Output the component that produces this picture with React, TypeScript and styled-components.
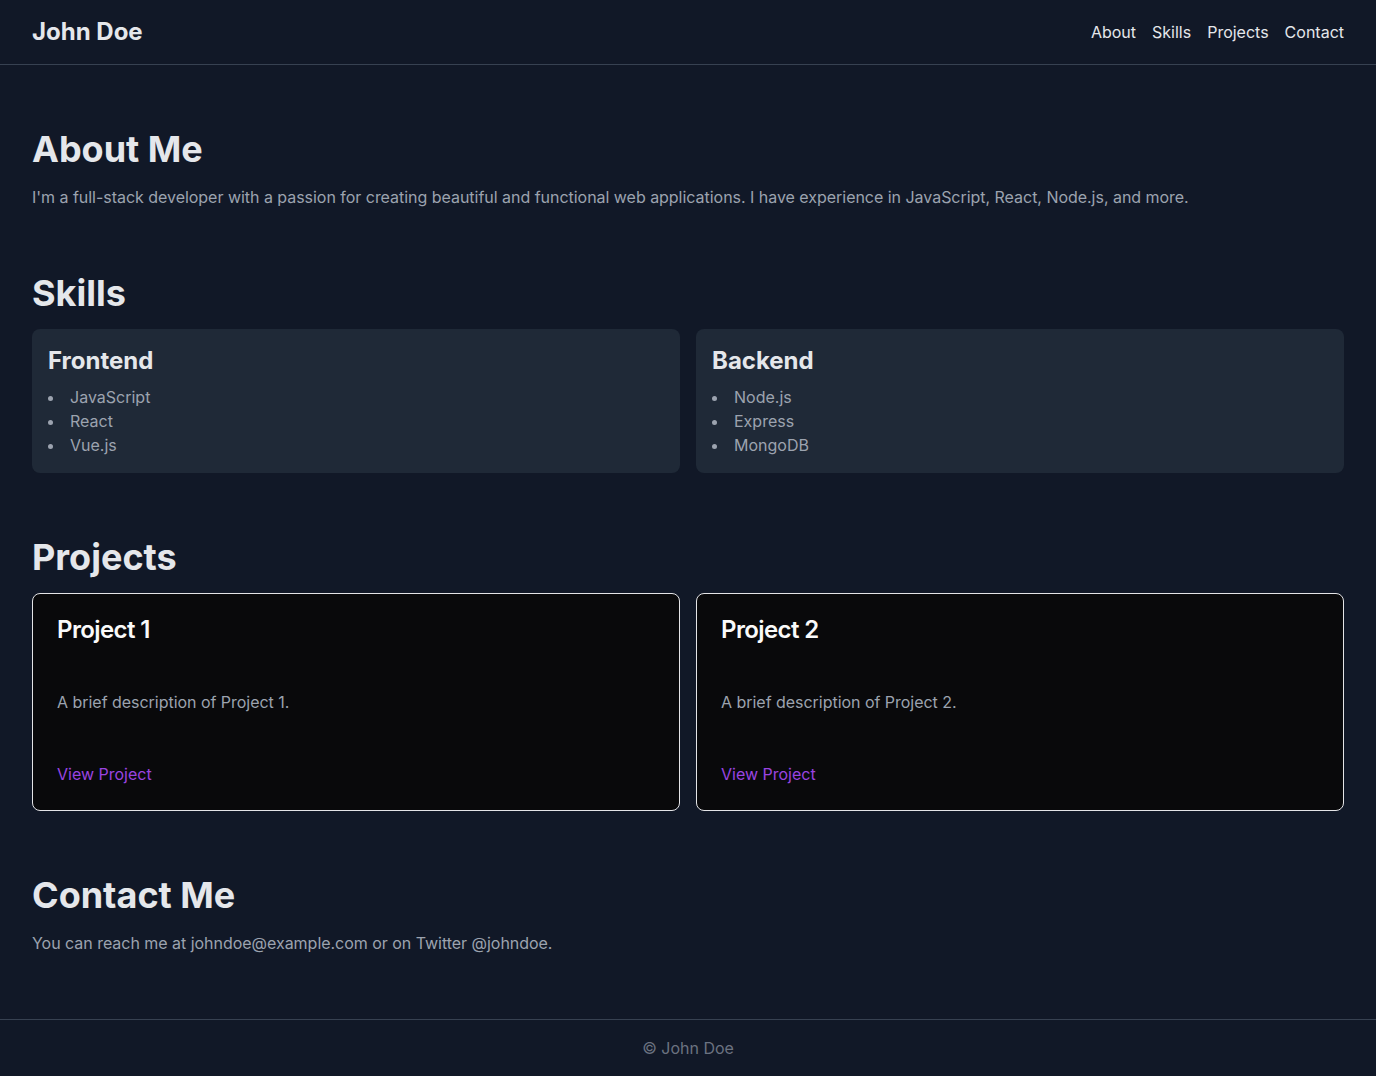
import React from "react";
import styled, { createGlobalStyle } from "styled-components";

const GlobalStyle = createGlobalStyle`
  html, body { margin: 0; padding: 0; }
  body {
    background: #111827;
    color: #e5e7eb;
    font-family: Inter, "Noto Sans", "Liberation Sans", sans-serif;
    font-size: 16px;
    line-height: 24px;
  }
  * { box-sizing: border-box; }
`;

const Page = styled.div`
  min-height: 100vh;
  display: flex;
  flex-direction: column;
  background: #111827;
`;

const Header = styled.header`
  display: flex;
  align-items: center;
  justify-content: space-between;
  padding: 16px 32px;
  border-bottom: 1px solid #374151;
`;

const Brand = styled.h1`
  margin: 0;
  font-size: 24px;
  line-height: 32px;
  font-weight: 700;
  color: #e5e7eb;
`;

const Nav = styled.nav`
  display: flex;
  gap: 16px;
`;

const NavLink = styled.a`
  color: #e5e7eb;
  text-decoration: none;
  font-size: 16px;
  line-height: 24px;
`;

const Main = styled.main`
  flex: 1;
  padding: 32px;
`;

const Section = styled.section`
  padding: 32px 0;
`;

const SectionTitle = styled.h2`
  margin: 0 0 16px;
  font-size: 36px;
  line-height: 40px;
  font-weight: 700;
  color: #e5e7eb;
`;

const Text = styled.p`
  margin: 0;
  color: #9ca3af;
  font-size: 16px;
  line-height: 24px;
  letter-spacing: -0.03px;
`;

const Grid = styled.div`
  display: grid;
  grid-template-columns: 1fr 1fr;
  gap: 16px;
`;

const SkillCard = styled.div`
  background: #1f2937;
  border-radius: 8px;
  padding: 16px;
`;

const SkillTitle = styled.h3`
  margin: 0 0 8px;
  font-size: 24px;
  line-height: 32px;
  font-weight: 700;
  color: #e5e7eb;
`;

const SkillList = styled.ul`
  margin: 0;
  padding-left: 0;
  list-style: disc inside;
  color: #9ca3af;
`;

const SkillItem = styled.li`
  line-height: 24px;
`;

const ProjectCard = styled.div`
  background: #09090b;
  border: 1px solid #e4e4e7;
  border-radius: 8px;
  padding: 24px;
  display: flex;
  flex-direction: column;
  gap: 48px;
`;

const ProjectTitle = styled.h3`
  margin: 0;
  font-size: 24px;
  line-height: 24px;
  font-weight: 600;
  letter-spacing: -0.6px;
  color: #fafafa;
`;

const ProjectLink = styled.a`
  color: #9a44e0;
  text-decoration: none;
  font-size: 16px;
  line-height: 24px;
`;

const Footer = styled.footer`
  border-top: 1px solid #374151;
  padding: 16px;
  text-align: center;
  color: #6b7280;
  font-size: 16px;
  line-height: 24px;
`;

const skills = [
  { title: "Frontend", items: ["JavaScript", "React", "Vue.js"] },
  { title: "Backend", items: ["Node.js", "Express", "MongoDB"] },
];

const projects = [1, 2];

export default function App() {
  return (
    <>
      <GlobalStyle />
      <Page>
        <Header>
          <Brand>John Doe</Brand>
          <Nav>
            <NavLink href="#about">About</NavLink>
            <NavLink href="#skills">Skills</NavLink>
            <NavLink href="#projects">Projects</NavLink>
            <NavLink href="#contact">Contact</NavLink>
          </Nav>
        </Header>
        <Main>
          <Section id="about">
            <SectionTitle>About Me</SectionTitle>
            <Text>
              I'm a full-stack developer with a passion for creating beautiful and functional web
              applications. I have experience in JavaScript, React, Node.js, and more.
            </Text>
          </Section>
          <Section id="skills">
            <SectionTitle>Skills</SectionTitle>
            <Grid>
              {skills.map((s) => (
                <SkillCard key={s.title}>
                  <SkillTitle>{s.title}</SkillTitle>
                  <SkillList>
                    {s.items.map((i) => (
                      <SkillItem key={i}>{i}</SkillItem>
                    ))}
                  </SkillList>
                </SkillCard>
              ))}
            </Grid>
          </Section>
          <Section id="projects">
            <SectionTitle>Projects</SectionTitle>
            <Grid>
              {projects.map((n) => (
                <ProjectCard key={n}>
                  <ProjectTitle>Project {n}</ProjectTitle>
                  <Text>A brief description of Project {n}.</Text>
                  <div>
                    <ProjectLink href="#">View Project</ProjectLink>
                  </div>
                </ProjectCard>
              ))}
            </Grid>
          </Section>
          <Section id="contact">
            <SectionTitle>Contact Me</SectionTitle>
            <Text>You can reach me at johndoe@example.com or on Twitter @johndoe.</Text>
          </Section>
        </Main>
        <Footer>© John Doe</Footer>
      </Page>
    </>
  );
}
